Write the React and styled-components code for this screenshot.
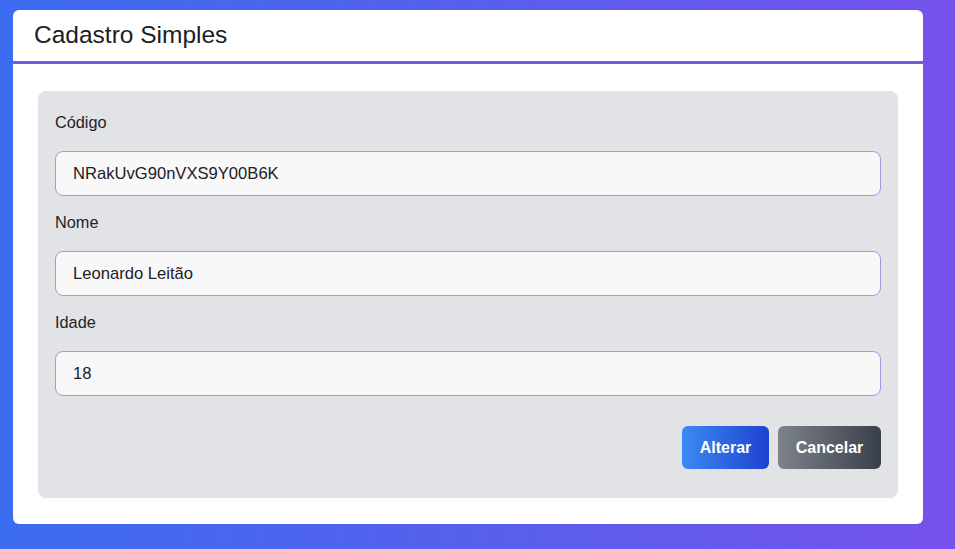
import React, { useState } from 'react'
import styled, { createGlobalStyle } from 'styled-components'

const GlobalStyle = createGlobalStyle`
  html, body {
    margin: 0;
    padding: 0;
  }
  body {
    font-family: 'Liberation Sans', Arial, sans-serif;
    color: #1f2226;
    background: linear-gradient(90deg, #3b6cf0 0%, #5a5eec 55%, #7652eb 100%);
    min-height: 549px;
  }
`

const Page = styled.div`
  padding: 10px 32px 25px 13px;
`

const Card = styled.div`
  background: #fff;
  border-radius: 6px;
  overflow: hidden;
`

const Header = styled.div`
  height: 51px;
  display: flex;
  align-items: center;
  padding: 0 21px;
  border-bottom: 3px solid #7a56e6;
`

const Title = styled.h1`
  margin: 0;
  font-size: 24.5px;
  font-weight: 400;
  color: #1d2024;
  padding-bottom: 1px;
`

const Body = styled.div`
  padding: 27px 25px 26px;
`

const Panel = styled.div`
  background: #e2e3e6;
  border-radius: 8px;
  padding: 19px 17px 29px;
  display: flex;
  flex-direction: column;
`

const Label = styled.label`
  font-size: 16.3px;
  line-height: 24px;
  margin-bottom: 17px;
`

const Input = styled.input`
  box-sizing: border-box;
  height: 45px;
  width: 100%;
  background: #f8f8f9;
  border: 1px solid #a597de;
  border-radius: 8px;
  padding: 0 17px;
  font-family: 'Liberation Sans', Arial, sans-serif;
  font-size: 16.6px;
  color: #1d2024;
  margin-bottom: ${(props) => (props.last ? '30px' : '14px')};
  outline: none;
`

const Actions = styled.div`
  display: flex;
  justify-content: flex-end;
  gap: 9px;
`

const Button = styled.button`
  height: 43px;
  padding: 0 17.7px;
  border: none;
  border-radius: 6px;
  color: #fff;
  font-family: 'Liberation Sans', Arial, sans-serif;
  font-weight: 700;
  font-size: 16px;
  cursor: pointer;
  background: ${(props) =>
    props.variant === 'secondary'
      ? 'linear-gradient(90deg, #7d828b 0%, #3a4049 100%)'
      : 'linear-gradient(90deg, #3c8af3 0%, #1d42cf 100%)'};
`

const App = () => {
  const [codigo, setCodigo] = useState('NRakUvG90nVXS9Y00B6K')
  const [nome, setNome] = useState('Leonardo Leitão')
  const [idade, setIdade] = useState('18')

  return (
    <>
      <GlobalStyle />
      <Page>
        <Card>
          <Header>
            <Title>Cadastro Simples</Title>
          </Header>
          <Body>
            <Panel>
              <Label htmlFor="codigo">Código</Label>
              <Input id="codigo" value={codigo} onChange={(e) => setCodigo(e.target.value)} readOnly />
              <Label htmlFor="nome">Nome</Label>
              <Input id="nome" value={nome} onChange={(e) => setNome(e.target.value)} />
              <Label htmlFor="idade">Idade</Label>
              <Input id="idade" last value={idade} onChange={(e) => setIdade(e.target.value)} />
              <Actions>
                <Button>Alterar</Button>
                <Button variant="secondary">Cancelar</Button>
              </Actions>
            </Panel>
          </Body>
        </Card>
      </Page>
    </>
  )
}

export default App
